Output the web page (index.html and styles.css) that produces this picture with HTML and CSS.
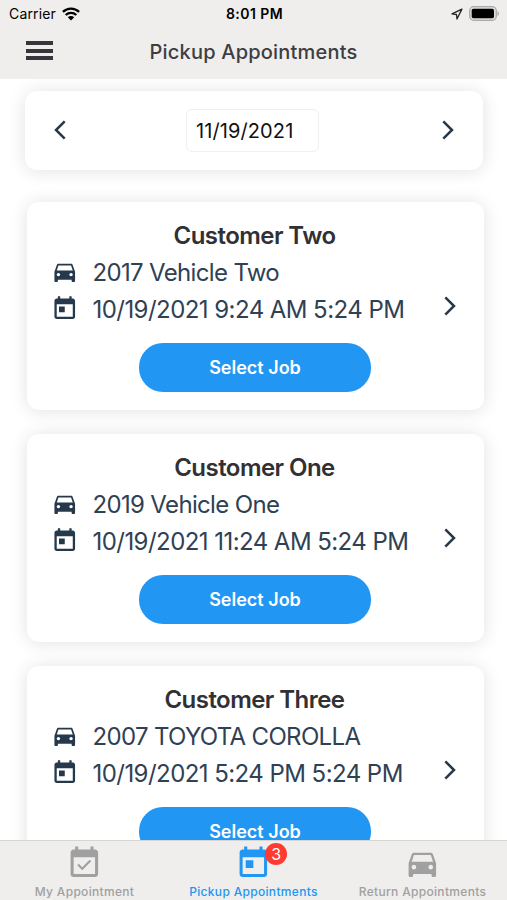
FILE: index.html
```html
<!DOCTYPE html>
<html lang="en">
<head>
  <meta charset="UTF-8">
  <meta name="viewport" content="width=device-width, initial-scale=1">
  <title>Pickup Appointments</title>
  <link rel="stylesheet" href="styles.css">
</head>
<body>

  <!-- Shared icons -->
  <svg class="sprite" width="0" height="0">
    <symbol id="icon-car" viewBox="0 0 24 24">
      <path d="M18.92 6.01C18.72 5.42 18.16 5 17.5 5h-11c-.66 0-1.21.42-1.42 1.01L3 12v8c0 .55.45 1 1 1h1c.55 0 1-.45 1-1v-1h12v1c0 .55.45 1 1 1h1c.55 0 1-.45 1-1v-8l-2.08-5.99zM6.5 16c-.83 0-1.5-.67-1.5-1.5S5.67 13 6.5 13s1.5.67 1.5 1.5S7.33 16 6.5 16zm11 0c-.83 0-1.5-.67-1.5-1.5s.67-1.5 1.5-1.5 1.5.67 1.5 1.5-.67 1.5-1.5 1.5zM5 11l1.5-4.5h11L19 11H5z"/>
    </symbol>
    <symbol id="icon-calendar" viewBox="0 0 24 24">
      <path d="M19 3h-1V1h-2v2H8V1H6v2H5c-1.11 0-1.99.9-1.99 2L3 19c0 1.1.89 2 2 2h14c1.1 0 2-.9 2-2V5c0-1.1-.9-2-2-2zm0 16H5V8h14v11zM7 10h5v5H7z"/>
    </symbol>
    <symbol id="icon-calendar-check" viewBox="0 0 24 24">
      <path d="M19 3h-1V1h-2v2H8V1H6v2H5c-1.11 0-1.99.9-1.99 2L3 19c0 1.1.89 2 2 2h14c1.1 0 2-.9 2-2V5c0-1.1-.9-2-2-2zm0 16H5V8h14v11zM16.5 10.6l-1-1-4.900 4.900-2.200-2.200-1 1 3.200 3.200z"/>
    </symbol>
    <symbol id="icon-chevron" viewBox="0 0 12 20">
      <path d="M1.3 1.3 10 10l-8.700 8.700" fill="none" stroke="currentColor" stroke-width="2.500"/>
    </symbol>
  </svg>

  <div class="app">
    <header class="header">
      <div class="status-bar">
        <div class="carrier">
          <span>Carrier</span>
          <svg class="wifi" viewBox="0 0 18 14">
            <path d="M0.900 4.900a11.800 11.800 0 0 1 16.200 0M3.700 8a7.700 7.700 0 0 1 10.600 0" fill="none" stroke="#000" stroke-width="2.300"/>
            <path d="M9 13.500 5.800 10.200a4.600 4.600 0 0 1 6.400 0z"/>
          </svg>
        </div>
        <span class="time">8:01 PM</span>
        <div class="indicators">
          <svg class="location" viewBox="0 0 12 12">
            <path d="M10.900 1.100 1 5.900l4.500.6.500 4.500z" fill="none" stroke="#222" stroke-width="1.300" stroke-linejoin="round"/>
          </svg>
          <svg class="battery" viewBox="0 0 31 15">
            <rect x="0.700" y="0.700" width="26.600" height="13.600" rx="4" fill="#ddd" stroke="#aaa" stroke-width="1.300"/>
            <rect x="2.700" y="2.700" width="22.300" height="9.600" rx="1.800"/>
            <path d="M28.500 5v5c2-.8 2-4.200 0-5z" fill="#aaa"/>
          </svg>
        </div>
      </div>
      <div class="title-bar">
        <button class="menu-btn" aria-label="Menu"><span></span><span></span><span></span></button>
        <h1>Pickup Appointments</h1>
      </div>
    </header>

    <main class="content">
      <div class="date-picker">
        <svg class="chevron prev"><use href="#icon-chevron"/></svg>
        <div class="date">11/19/2021</div>
        <svg class="chevron"><use href="#icon-chevron"/></svg>
      </div>

      <div class="job-list">
        <div class="job">
          <h2>Customer Two</h2>
          <div class="row"><svg><use href="#icon-car"/></svg><span class="vehicle">2017 Vehicle Two</span></div>
          <div class="row">
            <svg><use href="#icon-calendar"/></svg><span class="when">10/19/2021 9:24 AM 5:24 PM</span>
            <svg class="chevron"><use href="#icon-chevron"/></svg>
          </div>
          <button class="select-btn">Select Job</button>
        </div>

        <div class="job">
          <h2>Customer One</h2>
          <div class="row"><svg><use href="#icon-car"/></svg><span class="vehicle">2019 Vehicle One</span></div>
          <div class="row">
            <svg><use href="#icon-calendar"/></svg><span class="when">10/19/2021 11:24 AM 5:24 PM</span>
            <svg class="chevron"><use href="#icon-chevron"/></svg>
          </div>
          <button class="select-btn">Select Job</button>
        </div>

        <div class="job">
          <h2>Customer Three</h2>
          <div class="row"><svg><use href="#icon-car"/></svg><span class="vehicle">2007 TOYOTA COROLLA</span></div>
          <div class="row">
            <svg><use href="#icon-calendar"/></svg><span class="when">10/19/2021 5:24 PM 5:24 PM</span>
            <svg class="chevron"><use href="#icon-chevron"/></svg>
          </div>
          <button class="select-btn">Select Job</button>
        </div>
      </div>
    </main>

    <nav class="tabs">
      <div class="tab">
        <div class="tab-icon"><svg><use href="#icon-calendar-check"/></svg></div>
        <span>My Appointment</span>
      </div>
      <div class="tab active">
        <div class="tab-icon"><svg><use href="#icon-calendar"/></svg><b class="badge">3</b></div>
        <span>Pickup Appointments</span>
      </div>
      <div class="tab">
        <div class="tab-icon"><svg><use href="#icon-car"/></svg></div>
        <span>Return Appointments</span>
      </div>
    </nav>
  </div>

</body>
</html>
```
FILE: styles.css
```css
* {
  box-sizing: border-box;
}

body {
  margin: 0;
  font-family: Inter, "Liberation Sans", sans-serif;
  background: #fff;
}

h1, h2 {
  margin: 0;
}

button {
  padding: 0;
  border: none;
  font-family: inherit;
}

svg {
  display: block;
  fill: currentColor;
}

.sprite {
  position: absolute;
}

.app {
  display: flex;
  flex-direction: column;
  height: 900px;
  overflow: hidden;
}

/* Header */
.header {
  height: 79px;
  background: #efeeed;
}

.status-bar {
  display: grid;
  grid-template-columns: 1fr auto 1fr;
  align-items: center;
  height: 27px;
  padding: 0 7px 0 9px;
  font-size: 14px;
}

.carrier, .indicators {
  display: flex;
  align-items: center;
  gap: 6px;
}

.carrier {
  letter-spacing: 0.15px;
}

.wifi {
  width: 18px;
  height: 14px;
}

.time {
  font-weight: 600;
  letter-spacing: 0.45px;
}

.indicators {
  justify-content: flex-end;
}

.location {
  width: 12px;
  height: 12px;
}

.battery {
  width: 31px;
  height: 15px;
}

.title-bar {
  display: grid;
  grid-template-columns: 1fr auto 1fr;
  align-items: center;
  height: 50px;
  padding: 0 26px;
}

.title-bar h1 {
  font-size: 20px;
  font-weight: 500;
  letter-spacing: 0.2px;
  line-height: 24px;
  color: #3d3d42;
}

.menu-btn {
  display: flex;
  flex-direction: column;
  gap: 3.5px;
  width: 27px;
  margin-top: -3px;
  background: none;
}

.menu-btn span {
  width: 27px;
  height: 4px;
  background: #36363b;
}

/* Content */
.content {
  flex: 1;
  min-height: 0;
  overflow: hidden;
  padding: 12px 23px 0 25px;
}

.chevron {
  width: 12px;
  height: 20px;
  margin-top: -2px;
  color: #26384b;
}

.prev {
  transform: scaleX(-1);
}

.date-picker {
  display: flex;
  align-items: center;
  justify-content: space-between;
  width: 458px;
  height: 79px;
  padding: 0 29px;
  border-radius: 12px;
  background: #fff;
  box-shadow: 0 1px 18px rgba(0, 0, 0, 0.12);
}

.date {
  width: 133px;
  height: 43px;
  margin-right: 3px;
  padding-left: 9px;
  border: 1px solid #efefef;
  border-radius: 6px;
  font-size: 20px;
  letter-spacing: 0.1px;
  line-height: 42px;
  color: #111;
}

.job-list {
  display: flex;
  flex-direction: column;
  gap: 24px;
  margin-top: 32px;
  padding-left: 2px;
}

.job {
  width: 457px;
  height: 208px;
  flex-shrink: 0;
  padding: 16px 28px 0 24px;
  border-radius: 12px;
  background: #fff;
  box-shadow: 0 1px 18px rgba(0, 0, 0, 0.12);
}

.job h2 {
  height: 36px;
  padding-left: 2px;
  font-size: 24px;
  font-weight: 600;
  letter-spacing: -0.55px;
  line-height: 36px;
  text-align: center;
  color: #303035;
}

.row {
  display: flex;
  align-items: center;
  height: 37px;
  font-size: 24px;
  color: #26384b;
}

.row span {
  color: #2f4154;
}

.row svg {
  width: 27.5px;
  height: 27.5px;
  margin: -1px 14px 0 0;
}

.vehicle {
  letter-spacing: -0.66px;
}

.when {
  letter-spacing: -0.55px;
}

.row .chevron {
  width: 12px;
  height: 20px;
  margin: -8px 0 0 auto;
}

.select-btn {
  display: block;
  width: 232px;
  height: 49px;
  margin: 15px auto 0 88px;
  border-radius: 24px;
  background: #2196f3;
  font-size: 18px;
  font-weight: 600;
  color: #fff;
}

/* Bottom tabs */
.tabs {
  display: grid;
  grid-template-columns: repeat(3, 1fr);
  height: 60px;
  padding-top: 4px;
  border-top: 1px solid #d5d5d4;
  background: #efeeed;
  position: relative;
}

.tab {
  display: flex;
  flex-direction: column;
  align-items: center;
  font-size: 12px;
  font-weight: 500;
  letter-spacing: 0.32px;
  color: #a0a0a0;
}

.tab svg {
  width: 36.7px;
  height: 36.7px;
}

.tab span {
  margin-top: 2px;
  line-height: 15px;
  white-space: nowrap;
}

.tab.active {
  color: #2196f3;
}

.tab-icon {
  position: relative;
}

.badge {
  position: absolute;
  top: -2px;
  left: 30px;
  width: 22px;
  height: 22px;
  border-radius: 50%;
  background: #ff3b30;
  font-size: 16px;
  font-weight: 400;
  letter-spacing: 0;
  line-height: 22px;
  text-align: center;
  color: #fff;
}
```
